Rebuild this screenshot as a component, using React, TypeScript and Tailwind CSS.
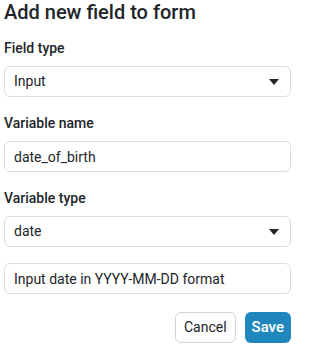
import { useState } from 'react';

function Caret() {
  return (
    <svg width="10" height="6" viewBox="0 0 10 6" className="shrink-0">
      <path d="M0 0h10L5 6z" fill="#212529" />
    </svg>
  );
}

function SelectBox({ value }: { value: string }) {
  return (
    <div className="flex h-[31px] items-center justify-between rounded-[6px] border border-[#dcdcdf] bg-white pl-[9px] pr-[11px] text-[14px] text-[#212529]">
      <span>{value}</span>
      <Caret />
    </div>
  );
}

function TextBox({ value, onChange }: { value: string; onChange: (v: string) => void }) {
  return (
    <input
      value={value}
      onChange={(e) => onChange(e.target.value)}
      className="h-[31px] w-full rounded-[6px] border border-[#dcdcdf] bg-white px-[9px] text-[14px] text-[#212529] outline-none"
    />
  );
}

export default function App() {
  const [name, setName] = useState('date_of_birth');
  const [hint, setHint] = useState('Input date in YYYY-MM-DD format');

  return (
    <div className="w-[295px] h-[346px] bg-white px-[4px] font-['Roboto',sans-serif] text-[#212529]">
      <h2 className="text-[20px] leading-[24px] font-medium">Add new field to form</h2>

      {/* Field type */}
      <div className="mt-[14px]">
        <label className="mb-[8px] block text-[14px] leading-[20px] font-medium">Field type</label>
        <SelectBox value="Input" />
      </div>

      {/* Variable name */}
      <div className="mt-[16px]">
        <label className="mb-[8px] block text-[14px] leading-[20px] font-medium">Variable name</label>
        <TextBox value={name} onChange={setName} />
      </div>

      {/* Variable type */}
      <div className="mt-[16px]">
        <label className="mb-[8px] block text-[14px] leading-[20px] font-medium">Variable type</label>
        <SelectBox value="date" />
      </div>

      <div className="mt-[16px]">
        <TextBox value={hint} onChange={setHint} />
      </div>

      <div className="mt-[18px] flex justify-end gap-[9px]">
        <button className="h-[31px] rounded-[6px] border border-[#d4d4d8] bg-white px-[8px] text-[14px] text-[#212529]">
          Cancel
        </button>
        <button className="h-[31px] rounded-[6px] bg-[#1f87bd] px-[7px] text-[15px] font-medium text-white">
          Save
        </button>
      </div>
    </div>
  );
}
